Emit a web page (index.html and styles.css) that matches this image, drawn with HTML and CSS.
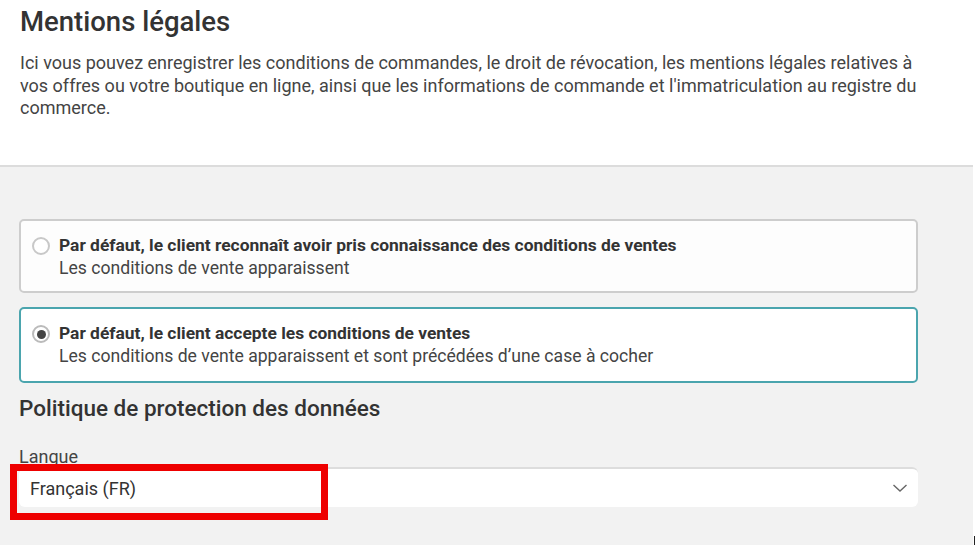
FILE: index.html
```html
<!DOCTYPE html>
<html lang="fr">
<head>
    <meta charset="UTF-8">
    <meta name="viewport" content="width=device-width, initial-scale=1.0">
    <title>Mentions légales</title>
    <link rel="stylesheet" href="styles.css">
</head>
<body>
    <div class="page">
        <header class="intro">
            <h1>Mentions légales</h1>
            <p>Ici vous pouvez enregistrer les conditions de commandes, le droit de révocation, les mentions légales relatives à vos offres ou votre boutique en ligne, ainsi que les informations de commande et l'immatriculation au registre du commerce.</p>
        </header>

        <main class="content">
            <label class="option">
                <span class="radio"></span>
                <span class="option-text">
                    <strong>Par défaut, le client reconnaît avoir pris connaissance des conditions de ventes</strong>
                    <span>Les conditions de vente apparaissent</span>
                </span>
            </label>

            <label class="option selected">
                <span class="radio checked"></span>
                <span class="option-text">
                    <strong>Par défaut, le client accepte les conditions de ventes</strong>
                    <span>Les conditions de vente apparaissent et sont précédées d’une case à cocher</span>
                </span>
            </label>

            <h2>Politique de protection des données</h2>

            <div class="field">
                <div class="field-label">Langue</div>
                <div class="select">
                    <span>Français (FR)</span>
                    <svg width="16" height="10" viewBox="0 0 16 10"><path d="M1.5 2 L8 8 L14.5 2" fill="none" stroke="#666" stroke-width="1.4"/></svg>
                    <div class="highlight"></div>
                </div>
            </div>
        </main>
    </div>
    <div class="cursor"></div>
</body>
</html>
```

FILE: styles.css
```css
html, body {
    margin: 0;
    height: 100%;
    background: #fff;
}

body {
    font-family: Roboto, "Liberation Sans", sans-serif;
    color: #333;
    overflow: hidden;
    position: relative;
}

.page {
    width: 973px;
    min-height: 100%;
    background: #f2f2f2;
}

.intro {
    background: #fff;
    padding: 6px 55px 0 20px;
    height: 159px;
    border-bottom: 2px solid #dcdcdc;
}

h1 {
    margin: 0;
    font-size: 27.5px;
    font-weight: 500;
    line-height: 32px;
    color: #333;
}

.intro p {
    margin: 14px 0 0;
    font-size: 18px;
    line-height: 22.5px;
    color: #444;
}

.content {
    padding: 52px 55px 0 19px;
}

.option {
    display: flex;
    align-items: flex-start;
    gap: 9px;
    background: #fdfdfd;
    border: 2px solid #cdcdcd;
    border-radius: 5px;
    padding: 13px 12px 11px 11px;
    margin-bottom: 14px;
}

.option.selected {
    background: #fff;
    border-color: #4ba5ae;
    padding-bottom: 13px;
    margin-bottom: 12px;
}

.radio {
    flex: none;
    box-sizing: border-box;
    width: 18px;
    height: 18px;
    margin-top: 3px;
    border: 2px solid #c8c8c8;
    border-radius: 50%;
    display: flex;
    align-items: center;
    justify-content: center;
    background: #fff;
}

.radio.checked {
    border-color: #bbb;
}

.radio.checked::after {
    content: "";
    width: 9px;
    height: 9px;
    border-radius: 50%;
    background: #444;
}

.option-text {
    display: flex;
    flex-direction: column;
    font-size: 17.6px;
    line-height: 23px;
    color: #444;
}

.option-text strong {
    font-weight: 700;
    color: #333;
    font-size: 17.4px;
}

h2 {
    margin: 0;
    font-size: 22.5px;
    font-weight: 500;
    line-height: 26px;
    color: #333;
}

.field {
    margin-top: 26px;
}

.field-label {
    font-size: 18px;
    line-height: 20px;
    color: #444;
}

.select {
    position: relative;
    display: flex;
    align-items: center;
    justify-content: space-between;
    height: 38px;
    padding: 0 10px 0 11px;
    background: #fff;
    border-top: 2px solid #ddd;
    border-radius: 6px;
    font-size: 18px;
    color: #333;
}

.highlight {
    position: absolute;
    left: -9px;
    top: -5px;
    width: 304px;
    height: 42px;
    border: 7px solid #ee0000;
}

.cursor {
    position: absolute;
    left: 974px;
    bottom: 0;
    width: 1px;
    height: 9px;
    background: #222;
}
```
